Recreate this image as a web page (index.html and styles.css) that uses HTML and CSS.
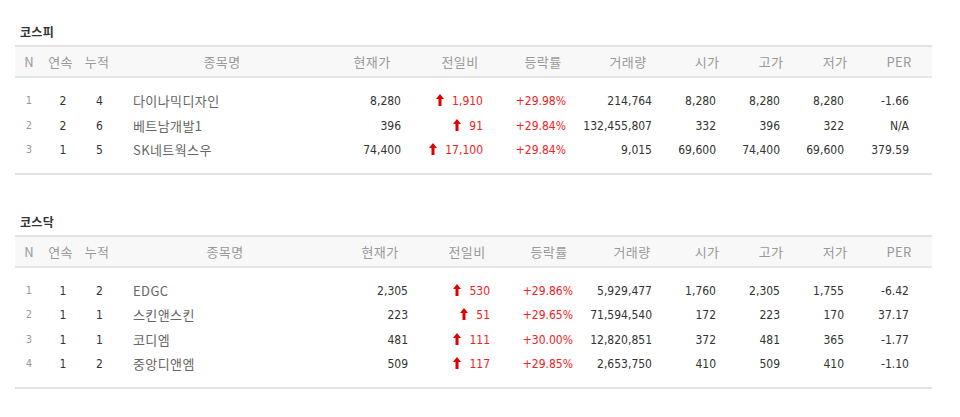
FILE: index.html
```html
<!DOCTYPE html>
<html lang="ko">
<head>
<meta charset="utf-8">
<title>상한가 종목</title>
<link rel="stylesheet" href="styles.css">
</head>
<body>
<div class="page">
  <section class="market">
    <h3 class="market-title">코스피</h3>
    <table class="stock-table kospi">
      <colgroup>
        <col style="width:26px"><col style="width:39px"><col style="width:34px"><col style="width:216px">
        <col style="width:84px"><col style="width:92px"><col style="width:74px"><col style="width:96px">
        <col style="width:62px"><col style="width:66px"><col style="width:62px"><col style="width:66px">
      </colgroup>
      <thead>
        <tr><th>N</th><th>연속</th><th>누적</th><th>종목명</th><th>현재가</th><th>전일비</th><th>등락률</th><th>거래량</th><th>시가</th><th>고가</th><th>저가</th><th>PER</th></tr>
      </thead>
      <tbody>
        <tr><td class="no">1</td><td class="cnt">2</td><td class="cnt">4</td><td class="name">다이나믹디자인</td><td>8,280</td><td class="up"><svg class="arrow" viewBox="0 0 8 12"><path d="M4 0 L8 5 H5.5 V12 H2.5 V5 H0 Z"/></svg>1,910</td><td class="up">+29.98%</td><td>214,764</td><td>8,280</td><td>8,280</td><td>8,280</td><td>-1.66</td></tr>
        <tr><td class="no">2</td><td class="cnt">2</td><td class="cnt">6</td><td class="name">베트남개발1</td><td>396</td><td class="up"><svg class="arrow" viewBox="0 0 8 12"><path d="M4 0 L8 5 H5.5 V12 H2.5 V5 H0 Z"/></svg>91</td><td class="up">+29.84%</td><td>132,455,807</td><td>332</td><td>396</td><td>322</td><td>N/A</td></tr>
        <tr><td class="no">3</td><td class="cnt">1</td><td class="cnt">5</td><td class="name">SK네트웍스우</td><td>74,400</td><td class="up"><svg class="arrow" viewBox="0 0 8 12"><path d="M4 0 L8 5 H5.5 V12 H2.5 V5 H0 Z"/></svg>17,100</td><td class="up">+29.84%</td><td>9,015</td><td>69,600</td><td>74,400</td><td>69,600</td><td>379.59</td></tr>
      </tbody>
    </table>
  </section>

  <section class="market market-next">
    <h3 class="market-title">코스닥</h3>
    <table class="stock-table kosdaq">
      <colgroup>
        <col style="width:26px"><col style="width:39px"><col style="width:34px"><col style="width:222px">
        <col style="width:88px"><col style="width:86px"><col style="width:78px"><col style="width:88px">
        <col style="width:62px"><col style="width:66px"><col style="width:62px"><col style="width:66px">
      </colgroup>
      <thead>
        <tr><th>N</th><th>연속</th><th>누적</th><th>종목명</th><th>현재가</th><th>전일비</th><th>등락률</th><th>거래량</th><th>시가</th><th>고가</th><th>저가</th><th>PER</th></tr>
      </thead>
      <tbody>
        <tr><td class="no">1</td><td class="cnt">1</td><td class="cnt">2</td><td class="name">EDGC</td><td>2,305</td><td class="up"><svg class="arrow" viewBox="0 0 8 12"><path d="M4 0 L8 5 H5.5 V12 H2.5 V5 H0 Z"/></svg>530</td><td class="up">+29.86%</td><td>5,929,477</td><td>1,760</td><td>2,305</td><td>1,755</td><td>-6.42</td></tr>
        <tr><td class="no">2</td><td class="cnt">1</td><td class="cnt">1</td><td class="name">스킨앤스킨</td><td>223</td><td class="up"><svg class="arrow" viewBox="0 0 8 12"><path d="M4 0 L8 5 H5.5 V12 H2.5 V5 H0 Z"/></svg>51</td><td class="up">+29.65%</td><td>71,594,540</td><td>172</td><td>223</td><td>170</td><td>37.17</td></tr>
        <tr><td class="no">3</td><td class="cnt">1</td><td class="cnt">1</td><td class="name">코디엠</td><td>481</td><td class="up"><svg class="arrow" viewBox="0 0 8 12"><path d="M4 0 L8 5 H5.5 V12 H2.5 V5 H0 Z"/></svg>111</td><td class="up">+30.00%</td><td>12,820,851</td><td>372</td><td>481</td><td>365</td><td>-1.77</td></tr>
        <tr><td class="no">4</td><td class="cnt">1</td><td class="cnt">2</td><td class="name">중앙디앤엠</td><td>509</td><td class="up"><svg class="arrow" viewBox="0 0 8 12"><path d="M4 0 L8 5 H5.5 V12 H2.5 V5 H0 Z"/></svg>117</td><td class="up">+29.85%</td><td>2,653,750</td><td>410</td><td>509</td><td>410</td><td>-1.10</td></tr>
      </tbody>
    </table>
  </section>
</div>
</body>
</html>
```

FILE: styles.css
```css
html, body {
  margin: 0;
  padding: 0;
  background: #ffffff;
}

.page {
  width: 917px;
  padding: 22px 0 0 15px;
  font-family: "DejaVu Sans Condensed", "Liberation Sans", "Noto Sans CJK KR", sans-serif;
}

.market-next {
  margin-top: 37px;
}

.market-title {
  margin: 0 0 3px 0;
  padding-left: 5px;
  font-family: "Noto Sans CJK KR", sans-serif;
  font-size: 12px;
  font-weight: 700;
  letter-spacing: 0.3px;
  line-height: 20px;
  color: #333333;
}

.stock-table {
  width: 917px;
  table-layout: fixed;
  border-collapse: collapse;
  border-top: 2px solid #e2e2e2;
  border-bottom: 2px solid #e2e2e2;
}

.stock-table th {
  height: 29px;
  padding: 0;
  background: #f8f8f8;
  border-bottom: 2px solid #e6e6e6;
  font-family: "Noto Sans CJK KR", sans-serif;
  font-size: 13px;
  font-weight: 400;
  letter-spacing: 0.3px;
  color: #999999;
  text-align: center;
  white-space: nowrap;
}

.stock-table th:first-child {
  padding-left: 2px;
}

.stock-table td {
  padding: 0 23px 0 0;
  line-height: 24.5px;
  font-size: 12px;
  color: #333333;
  text-align: right;
  white-space: nowrap;
}

.stock-table tbody tr:first-child td {
  padding-top: 11px;
}

.stock-table tbody tr:last-child td {
  padding-bottom: 10px;
}

.stock-table td.no {
  padding: 0 0 0 2px;
  text-align: center;
  font-size: 11px;
  color: #999999;
}

.stock-table td.cnt {
  padding: 0 0 0 5px;
  text-align: center;
  color: #333333;
}

.stock-table td.name {
  padding: 0 0 0 19px;
  text-align: left;
  font-family: "Noto Sans CJK KR", sans-serif;
  font-size: 13px;
  letter-spacing: 0.4px;
  color: #666666;
}

.stock-table tbody tr:first-child td.no,
.stock-table tbody tr:first-child td.cnt,
.stock-table tbody tr:first-child td.name {
  padding-top: 11px;
}

.stock-table td.up {
  color: #ee2222;
}

.arrow {
  display: inline-block;
  width: 8px;
  height: 12px;
  margin-right: 8px;
  vertical-align: -1px;
  fill: #e00000;
}

/* per-column right padding, KOSPI */
.kospi td:nth-child(5) { padding-right: 13px; }
.kospi td:nth-child(6) { padding-right: 23px; }
.kospi td:nth-child(7) { padding-right: 14px; }
.kospi td:nth-child(8) { padding-right: 24px; }
.kospi td:nth-child(9) { padding-right: 22px; }
.kospi td:nth-child(10) { padding-right: 24px; }
.kospi td:nth-child(11) { padding-right: 22px; }
.kospi td:nth-child(12) { padding-right: 23px; }

/* per-column right padding, KOSDAQ */
.kosdaq td:nth-child(5) { padding-right: 16px; }
.kosdaq td:nth-child(6) { padding-right: 20px; }
.kosdaq td:nth-child(7) { padding-right: 15px; }
.kosdaq td:nth-child(8) { padding-right: 24px; }
.kosdaq td:nth-child(9) { padding-right: 22px; }
.kosdaq td:nth-child(10) { padding-right: 24px; }
.kosdaq td:nth-child(11) { padding-right: 22px; }
.kosdaq td:nth-child(12) { padding-right: 23px; }
```
